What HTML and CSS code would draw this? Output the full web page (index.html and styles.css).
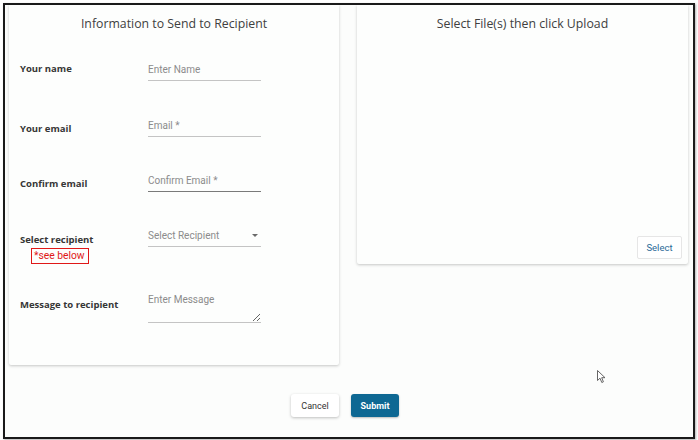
FILE: index.html
```html
<!DOCTYPE html>
<html>
<head>
<meta charset="utf-8">
<link rel="stylesheet" href="styles.css">
</head>
<body>
<div class="frame">
  <div class="cards">
    <section class="card card-info">
      <h2 class="card-title">Information to Send to Recipient</h2>
      <div class="form">
        <div class="row row-first">
          <label class="label">Your name</label>
          <input class="field" type="text" placeholder="Enter Name">
        </div>
        <div class="row">
          <label class="label">Your email</label>
          <input class="field" type="text" placeholder="Email *">
        </div>
        <div class="row">
          <label class="label">Confirm email</label>
          <input class="field field-active" type="text" placeholder="Confirm Email *">
        </div>
        <div class="row row-tall">
          <div class="label">
            <div>Select recipient</div>
            <span class="note">*see below</span>
          </div>
          <div class="field select">
            <span>Select Recipient</span>
            <span class="caret"></span>
          </div>
        </div>
        <div class="row row-message">
          <label class="label">Message to recipient</label>
          <div class="textarea-wrap">
            <textarea class="area" placeholder="Enter Message"></textarea>
          </div>
        </div>
      </div>
    </section>
    <section class="card card-upload">
      <h2 class="card-title">Select File(s) then click Upload</h2>
      <button class="btn-select">Select</button>
    </section>
  </div>
  <div class="actions">
    <button class="btn btn-cancel">Cancel</button>
    <button class="btn btn-submit">Submit</button>
  </div>
  <svg class="cursor" width="10" height="14" viewBox="0 0 10 14">
    <path d="M0.5 0.5 L0.5 10.5 L3 8.2 L4.8 12.5 L6.4 11.8 L4.7 7.7 L8 7.7 Z" fill="#fff" stroke="#555" stroke-width="0.9" stroke-linejoin="round"/>
  </svg>
</div>
</body>
</html>
```
FILE: styles.css
```css
* { box-sizing: border-box; }
html, body { margin: 0; padding: 0; background: #fff; }
body { width: 698px; height: 440px; padding: 3px 0 0 3px; font-family: "Open Sans", "Liberation Sans", sans-serif; }

.frame {
  position: relative;
  width: 692px;
  height: 436px;
  border: 2px solid #1a1a1a;
  background: #fcfdfc;
  box-shadow: 1px 1px 2px rgba(0,0,0,0.3);
  overflow: hidden;
}

.cards {
  display: flex;
  align-items: flex-start;
  gap: 18px;
  padding: 0 5px 0 4px;
}

.card {
  background: #fdfefd;
  box-shadow: 0 1px 3px rgba(0,0,0,0.22);
  border-radius: 0 0 2px 2px;
}

.card-info {
  width: 330px;
  height: 360px;
  padding: 10px 0 0 11px;
}

.card-upload {
  width: 331px;
  height: 259px;
  padding-top: 10px;
  display: flex;
  flex-direction: column;
}

.card-title {
  margin: 0;
  font-size: 12.3px;
  font-weight: 400;
  line-height: 18px;
  color: #404040;
  text-align: center;
}
.card-info .card-title { margin-left: -11px; }

.form { margin-top: 28px; }

.row {
  display: flex;
  align-items: flex-start;
  min-height: 55px;
}
.row-first { min-height: 56px; }
.row-tall { min-height: 65px; }

.label {
  width: 128px;
  padding-top: 5px;
  font-size: 9.5px;
  font-weight: 700;
  line-height: 14px;
  color: #363636;
}
.row-first .label { padding-top: 1px; }
.row-tall .label { padding-top: 6px; }
.row-message .label { padding-top: 6px; }

.note {
  display: inline-block;
  margin: 1px 0 0 11px;
  height: 16px;
  padding: 0 3px 0 2px;
  border: 1px solid #e01818;
  color: #e01818;
  font-family: Roboto, "Liberation Sans", sans-serif;
  font-weight: 400;
  font-size: 10.3px;
  line-height: 14px;
}

.field {
  width: 113px;
  height: 20px;
  padding: 0 0 3px 0;
  border: none;
  border-bottom: 1px solid #c4c4c4;
  background: transparent;
  font-family: Roboto, "Liberation Sans", sans-serif;
  font-size: 10px;
  color: #333;
  outline: none;
}
.field::placeholder { color: #8c8c8c; }
.field-active { border-bottom-color: #7a7a7a; }

.select {
  display: flex;
  align-items: center;
  justify-content: space-between;
  color: #8c8c8c;
  padding-right: 3px;
}
.caret {
  width: 0; height: 0;
  border-left: 3.5px solid transparent;
  border-right: 3.5px solid transparent;
  border-top: 3.5px solid #6a6a6a;
}

.textarea-wrap {
  position: relative;
  width: 113px;
  height: 31px;
  border-bottom: 1px solid #c4c4c4;
}
.area {
  display: block;
  width: 113px;
  height: 30px;
  padding: 1px 0 0 0;
  border: none;
  background: transparent;
  font-family: Roboto, "Liberation Sans", sans-serif;
  font-size: 10px;
  line-height: 14px;
  color: #333;
  outline: none;
  resize: vertical;
}
.area::placeholder { color: #8c8c8c; }

.btn-select {
  margin: auto 6px 5px auto;
  width: 45px;
  height: 23px;
  border: 1px solid #e6e6e6;
  border-radius: 2px;
  background: #fff;
  color: #2b6a98;
  font-family: Roboto, "Liberation Sans", sans-serif;
  font-size: 9.5px;
  padding: 0;
}

.actions {
  display: flex;
  justify-content: center;
  gap: 12px;
  margin-top: 29px;
  padding-right: 8px;
}

.btn {
  height: 23px;
  border: none;
  border-radius: 3px;
  font-family: Roboto, "Liberation Sans", sans-serif;
  font-size: 9px;
  padding: 0;
}
.btn-cancel {
  width: 48px;
  background: #fff;
  color: #333;
  box-shadow: 0 1px 3px rgba(0,0,0,0.25);
}
.btn-submit {
  width: 48px;
  background: #0e6893;
  color: #fff;
  font-weight: 700;
  box-shadow: 0 1px 2px rgba(0,0,0,0.25);
}

.cursor {
  position: absolute;
  left: 592px;
  top: 365px;
}
```
